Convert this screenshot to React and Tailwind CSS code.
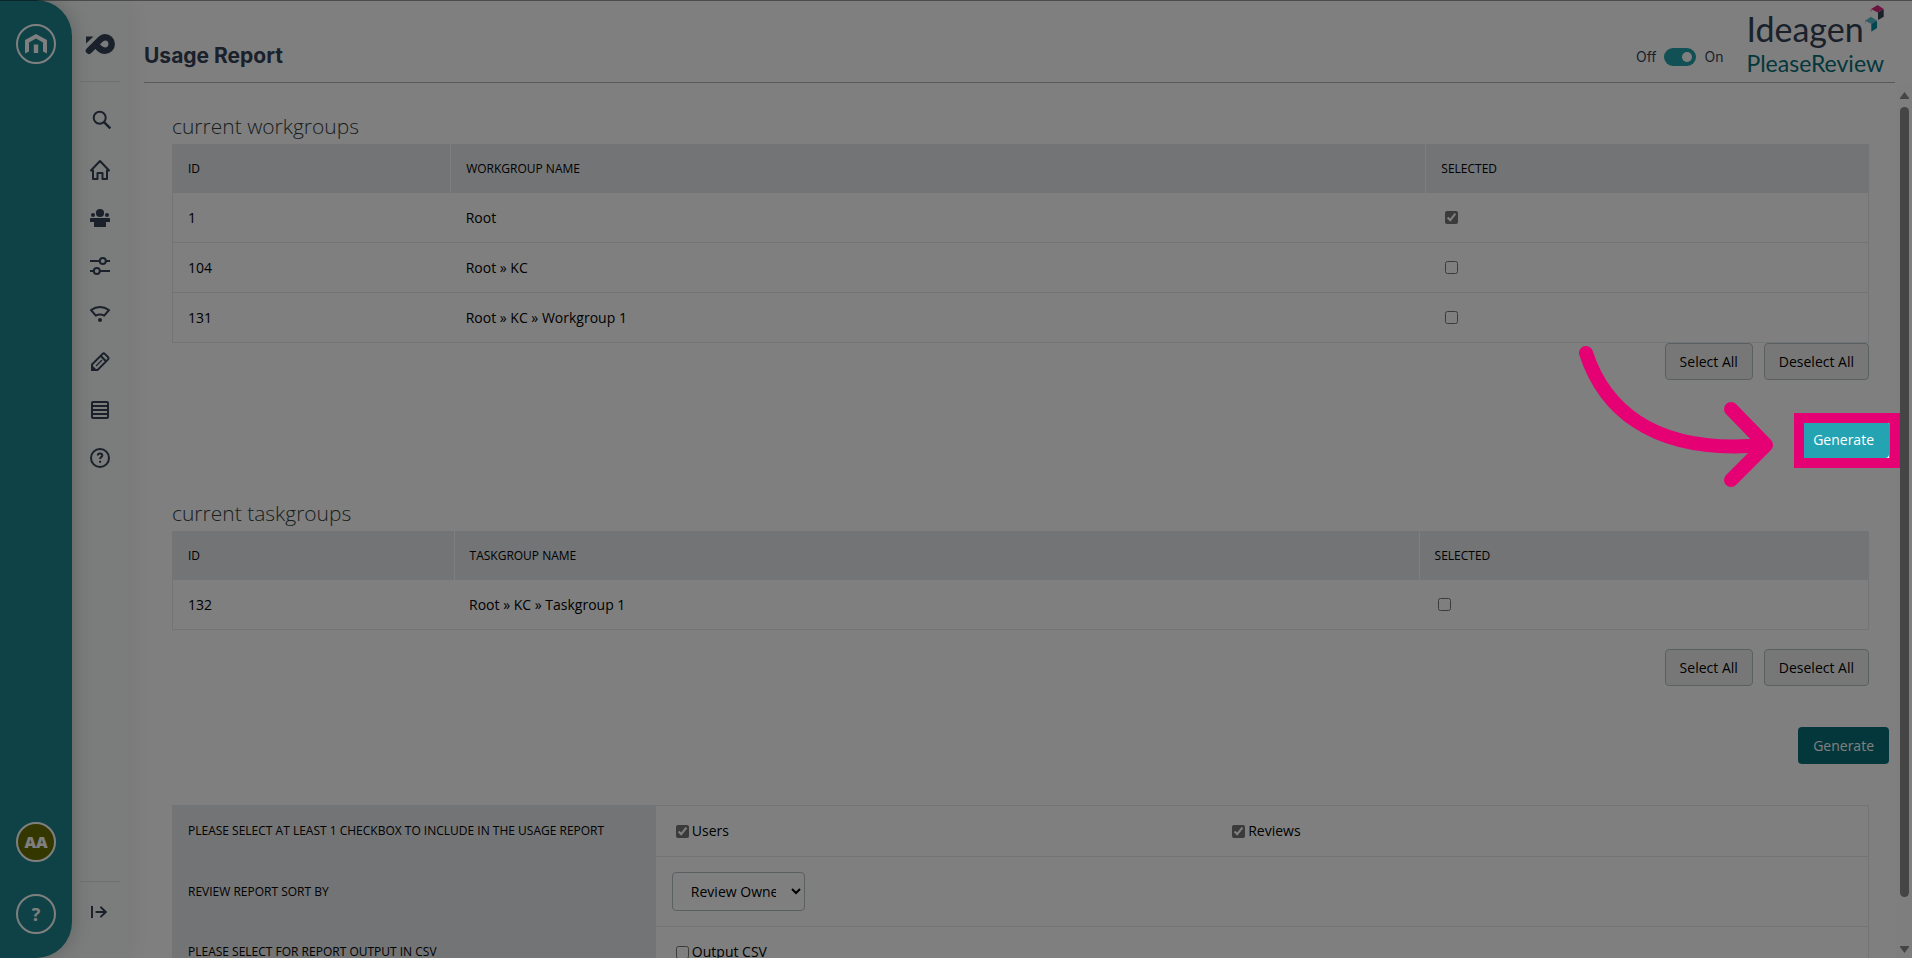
import React, { useState } from "react";
import { ArrowRight } from "lucide-react";

const workgroups = [
  { id: 1, name: "Root" },
  { id: 104, name: "Root » KC" },
  { id: 131, name: "Root » KC » Workgroup 1" },
];

const taskgroups = [{ id: 132, name: "Root » KC » Taskgroup 1" }];

const navItems = [
  {
    label: "Search",
    icon: (
      <>
        <circle cx="9.700" cy="5.800" r="6" />
        <path d="M14 10.200 20.300 16.400" strokeWidth="2.400" />
      </>
    ),
  },
  {
    label: "Home",
    icon: <path d="M1 10.500 10 1l9 9.500h-2V19h-4.500v-6h-5v6H3v-8.500Z" strokeLinejoin="round" />,
  },
  {
    label: "Groups",
    icon: (
      <g fill="currentColor" stroke="none">
        <circle cx="10" cy="5" r="4.100" />
        <circle cx="3" cy="7" r="2" />
        <circle cx="17" cy="7" r="2" />
        <path d="M1 10h18a1 1 0 0 1 1 1v3h-4v5H4v-5H0v-3a1 1 0 0 1 1-1Z" />
      </g>
    ),
  },
  {
    label: "Settings",
    icon: (
      <>
        <path d="M0 5h9.500M16 5h4M0 15h3.500M10 15h10" />
        <circle cx="12.800" cy="5" r="3" />
        <circle cx="6.800" cy="15" r="3" />
      </>
    ),
  },
  {
    label: "Status",
    icon: (
      <>
        <path d="M1 6Q10-.2 19 6L14.200 11.600Q10 9.400 5.800 11.600Z" strokeLinejoin="round" />
        <circle cx="10" cy="16" r="2" fill="currentColor" stroke="none" />
      </>
    ),
  },
  {
    label: "Edit",
    icon: (
      <>
        <path
          d="M2 18v-5.500L12.600 1.900a1.600 1.600 0 0 1 2.200 0l3.300 3.300a1.600 1.600 0 0 1 0 2.200L7.500 18Z"
          strokeLinejoin="round"
        />
        <path d="m10.800 4 5.200 5.200" />
        <path d="m6 14 6-6" strokeWidth="1.200" />
        <path d="M2 14.500V18h3.500Z" fill="currentColor" />
      </>
    ),
  },
  {
    label: "Reports",
    icon: (
      <>
        <rect x="2" y="2" width="16" height="16" rx="1" />
        <path d="M2 6h16M2 10h16M2 14h16" />
      </>
    ),
  },
  {
    label: "Help",
    icon: (
      <>
        <circle cx="10" cy="10" r="9" />
        <path d="M7.800 7.600c0-1.300 1-2 2.200-2s2.300.7 2.300 1.900c0 1.500-2.200 1.700-2.200 3.600M10.100 12.800v2" />
      </>
    ),
  },
];

function AppRail() {
  return (
    <aside className="flex w-[72px] flex-col items-center rounded-r-[36px] bg-[#1e848c] py-6 text-white shadow-[0_0_20px_rgba(0,0,0,0.22)]">
      <a
        href="#hub"
        aria-label="Hub"
        className="flex size-10 items-center justify-center rounded-full border-2 border-white"
      >
        <svg viewBox="0 0 22 20" className="h-5 w-[22px]" fill="currentColor">
          <path d="M11 0 22 6v13.500l-4-2V8.500L11 4.500 4 8.500v9l-4 2V6Z" />
          <path d="M8.800 10.500h4.400V19H8.800Z" />
        </svg>
      </a>
      <button className="mt-auto size-10 rounded-full border-2 border-white bg-[#686f00] text-base font-extrabold">
        AA
      </button>
      <button className="mt-8 size-10 rounded-full border-2 border-white text-lg font-bold">
        ?
      </button>
    </aside>
  );
}

function SideNav() {
  return (
    <nav className="flex w-14 flex-col items-center text-[#344257]">
      <a href="#home" aria-label="PleaseReview" className="mt-8 flex h-6 items-center">
        <svg viewBox="0 0 30 22" className="h-[22px] w-[30px]">
          <path d="M1 3.500h7.500L1 10.500Z" fill="currentColor" />
          <path
            d="M4 17.800 14.500 7.300C17 4.800 18 4.300 20 4.300a6.700 6.700 0 0 1 0 13.400c-3 0-4.500-1-6.500-3.200"
            fill="none"
            stroke="currentColor"
            strokeWidth="6.500"
            strokeLinecap="round"
          />
        </svg>
      </a>
      <div className="mt-[25px] w-10 border-t border-[#dcdfde]" />
      <ul className="mt-[30px] flex flex-col gap-7">
        {navItems.map((item) => (
          <li key={item.label}>
            <a href={"#" + item.label.toLowerCase()} aria-label={item.label}>
              <svg
                viewBox="0 0 20 20"
                className="size-5 overflow-visible"
                fill="none"
                stroke="currentColor"
                strokeWidth="2"
              >
                {item.icon}
              </svg>
            </a>
          </li>
        ))}
      </ul>
      <div className="mt-auto w-10 border-t border-[#dcdfde]" />
      <button aria-label="Expand menu" className="mt-5 mb-9 flex h-5 items-center">
        <span className="h-3 w-[2px] bg-current" />
        <ArrowRight className="size-4" strokeWidth={3} />
      </button>
    </nav>
  );
}

function Logo() {
  return (
    <div className="relative mb-[5px] font-[Lato,sans-serif]">
      <div className="text-[34px] leading-10 text-[#344257]">Ideagen</div>
      <div className="text-[23px] leading-7 text-[#066e76]">PleaseReview</div>
      <svg viewBox="0 0 19 27" className="absolute -top-1 right-0 h-[27px] w-[19px]">
        <path d="M6 4 12.700 0l6 4-6 3.500Z" fill="#d9297f" />
        <path d="M18.700 4v7.700L13 15V7.500Z" fill="#344257" />
        <path d="M6 4v3" stroke="#d9297f" strokeWidth=".5" />
        <path d="M0 15.700l6-4 6 4L6.500 19Z" fill="#5cb8cc" />
        <path d="M12 15.700V23l-5.700 3.700V19Z" fill="#008ca3" />
        <path d="M.3 15.700v3" stroke="#5cb8cc" strokeWidth=".5" />
      </svg>
    </div>
  );
}

function Header() {
  const [on, setOn] = useState(true);

  return (
    <header className="mr-[17px] ml-4 flex h-[83px] shrink-0 items-end justify-between border-b border-[#b0b3b8] pr-[11px]">
      <h1 className="mb-3 font-[Inter,sans-serif] text-[21px] leading-7 font-bold text-[#344257]">
        Usage Report
      </h1>
      <div className="flex items-end">
        <label className="mr-[23px] mb-[15px] flex items-center gap-2 font-[Inter,sans-serif] text-sm text-[#344257]">
          Off
          <input
            type="checkbox"
            checked={on}
            onChange={(e) => setOn(e.target.checked)}
            className="peer sr-only"
          />
          <span className="flex h-[18px] w-8 items-center justify-end rounded-full bg-[#22a0a8] px-1">
            <span className="size-[10px] rounded-full bg-white" />
          </span>
          On
        </label>
        <Logo />
      </div>
    </header>
  );
}

function GroupTable({ title, nameLabel, rows, cols, initial }) {
  const [selected, setSelected] = useState(initial);

  const toggle = (id) =>
    setSelected((s) => (s.includes(id) ? s.filter((x) => x !== id) : [...s, id]));

  return (
    <>
      <h2 className="pb-0.5 text-[21px] leading-8 font-light text-[#33403f]">{title}</h2>
      <table className="w-full table-fixed border-collapse border border-[#e6e8ec] text-left text-sm text-black">
        <colgroup>
          {cols.map((c) => (
            <col key={c} className={c} />
          ))}
        </colgroup>
        <thead>
          <tr className="h-12 bg-[#e6e8ec] text-xs uppercase">
            <th className="border-r border-white px-[15px] font-normal">ID</th>
            <th className="border-r border-white px-[15px] font-normal">{nameLabel}</th>
            <th className="px-[15px] font-normal">Selected</th>
          </tr>
        </thead>
        <tbody>
          {rows.map((r) => (
            <tr key={r.id} className="h-[50px] border-t border-[#e6e8ec]">
              <td className="px-[15px]">{r.id}</td>
              <td className="px-[15px]">{r.name}</td>
              <td className="px-[19px]">
                <input
                  type="checkbox"
                  aria-label={"Select " + r.name}
                  checked={selected.includes(r.id)}
                  onChange={() => toggle(r.id)}
                  className="block size-[13px] accent-[#767676]"
                />
              </td>
            </tr>
          ))}
        </tbody>
      </table>
    </>
  );
}

function SelectButtons() {
  const style =
    "h-[37px] rounded border border-[#b5bfc3] bg-[#efefef] px-[14px] text-sm text-black";
  return (
    <div className="flex justify-end gap-[11px]">
      <button className={style}>Select All</button>
      <button className={style}>Deselect All</button>
    </div>
  );
}

function ReportOptions() {
  const th = "bg-[#e6e8ec] px-[15px] text-left text-xs font-normal uppercase";
  const box = "size-[13px] accent-[#767676]";

  return (
    <table className="w-full table-fixed border-collapse border border-[#e6e8ec] text-sm text-black">
      <colgroup>
        <col className="w-[28.5%]" />
        <col className="w-[32.8%]" />
        <col />
      </colgroup>
      <tbody>
        <tr className="h-[51px]">
          <th className={th}>Please select at least 1 checkbox to include in the usage report</th>
          <td className="px-5">
            <label className="flex items-center gap-[3px]">
              <input type="checkbox" defaultChecked className={box} />
              Users
            </label>
          </td>
          <td className="px-5">
            <label className="flex items-center gap-[3px]">
              <input type="checkbox" defaultChecked className={box} />
              Reviews
            </label>
          </td>
        </tr>
        <tr className="h-[70px]">
          <th className={th}>
            <label htmlFor="sort-by">Review report sort by</label>
          </th>
          <td colSpan={2} className="border-t border-[#e6e8ec] px-4">
            <select
              id="sort-by"
              className="block h-[39px] w-[133px] rounded border border-[#b5bfc3] bg-white pr-3 pl-[14px]"
            >
              <option>Review Owner</option>
              <option>Review Title</option>
            </select>
          </td>
        </tr>
        <tr className="h-[51px]">
          <th className={th}>Please select for report output in CSV</th>
          <td colSpan={2} className="border-t border-[#e6e8ec] px-5">
            <label className="flex items-center gap-[3px]">
              <input type="checkbox" className={box} />
              Output CSV
            </label>
          </td>
        </tr>
      </tbody>
    </table>
  );
}

function ScrollTrack() {
  return (
    <div className="flex w-[15px] shrink-0 flex-col items-center bg-[#fcfcfc] pt-[9px] pb-[5px] text-[#8b8b8b]">
      <svg viewBox="0 0 9 7" className="h-[7px] w-[9px]" fill="currentColor">
        <path d="M4.500 0 9 6v1H0V6Z" />
      </svg>
      <div className="mt-2 w-[9px] grow-[790] rounded-full bg-[#8b8b8b]" />
      <div className="grow-[49]" />
      <svg viewBox="0 0 9 7" className="h-[7px] w-[9px]" fill="currentColor">
        <path d="M0 0h9v1L4.500 7 0 1Z" />
      </svg>
    </div>
  );
}

export default function App() {
  return (
    <div className="flex h-screen overflow-hidden bg-white font-['Open_Sans',sans-serif]">
      <div className="flex bg-[#f6faf8] shadow-[0_0_28px_rgba(0,0,0,0.08)]">
        <AppRail />
        <SideNav />
      </div>

      <div className="flex min-w-0 grow flex-col">
        <Header />
        <div className="flex min-h-0 grow">
          <main className="min-w-0 flex-1 pt-[27px] pr-7 pl-11">
            <GroupTable
              title="current workgroups"
              nameLabel="Workgroup name"
              rows={workgroups}
              cols={["w-[16.4%]", "w-[57.5%]", "w-[26.1%]"]}
              initial={[1]}
            />
            <SelectButtons />

            <div className="mt-[41px] -mr-5 flex justify-end">
              <div className="relative z-50 bg-white">
                <button className="h-[37px] rounded bg-[#24a3b2] px-[15px] text-sm font-medium text-white">
                  Generate
                </button>
                <div className="pointer-events-none absolute -top-2 -right-[11px] -bottom-[10px] -left-1 border-10 border-[#e50073]" />
              </div>
            </div>

            <div className="mt-[39px]">
              <GroupTable
                title="current taskgroups"
                nameLabel="Taskgroup name"
                rows={taskgroups}
                cols={["w-[16.6%]", "w-[56.9%]", "w-[26.5%]"]}
                initial={[]}
              />
            </div>
            <div className="mt-[19px]">
              <SelectButtons />
            </div>

            <div className="mt-[41px] -mr-5 flex justify-end">
              <button className="h-[37px] rounded bg-[#066e76] px-[15px] text-sm font-medium text-white">
                Generate
              </button>
            </div>

            <div className="mt-[41px]">
              <ReportOptions />
            </div>
          </main>
          <ScrollTrack />
        </div>
      </div>

      {/* dimmed backdrop with the callout arrow above it */}
      <div className="pointer-events-none fixed inset-0 z-40 border-t border-black/40 bg-black/50" />
      <svg
        viewBox="0 0 198 156"
        className="pointer-events-none fixed top-[344px] right-[136px] z-50 h-[156px] w-[198px]"
        fill="none"
        stroke="#e50073"
        strokeWidth="14"
        strokeLinecap="round"
        strokeLinejoin="round"
      >
        <path d="M8 9C24 58 68 112 186 101" />
        <path d="M153 65 188 101 153 136" />
      </svg>
    </div>
  );
}
